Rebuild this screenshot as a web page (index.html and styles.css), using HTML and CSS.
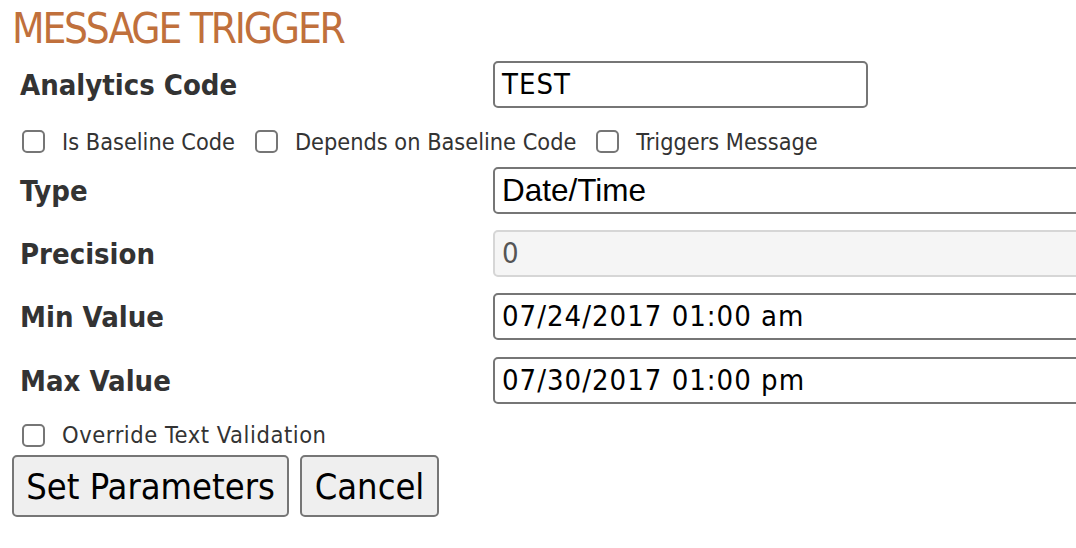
FILE: index.html
```html
<!DOCTYPE html>
<html>
<head>
<meta charset="utf-8">
<link rel="stylesheet" href="styles.css">
</head>
<body>
<div class="page">
  <h1 class="title">MESSAGE TRIGGER</h1>
  <div class="row row-first">
    <label class="label">Analytics Code</label>
    <div class="field field-short">TEST</div>
  </div>
  <div class="checks checks-top">
    <label class="check"><span class="box"></span>Is Baseline Code</label>
    <label class="check"><span class="box"></span>Depends on Baseline Code</label>
    <label class="check"><span class="box"></span>Triggers Message</label>
  </div>
  <div class="row row-type">
    <label class="label">Type</label>
    <div class="field field-select">Date/Time</div>
  </div>
  <div class="row">
    <label class="label">Precision</label>
    <div class="field field-disabled">0</div>
  </div>
  <div class="row">
    <label class="label">Min Value</label>
    <div class="field">07/24/2017 01:00 am</div>
  </div>
  <div class="row row-max">
    <label class="label">Max Value</label>
    <div class="field">07/30/2017 01:00 pm</div>
  </div>
  <div class="checks checks-single">
    <label class="check"><span class="box"></span>Override Text Validation</label>
  </div>
  <div class="buttons">
    <button class="btn btn-set">Set Parameters</button>
    <button class="btn btn-cancel">Cancel</button>
  </div>
</div>
</body>
</html>
```
FILE: styles.css
```css
html, body {
  margin: 0;
  padding: 0;
  background: #ffffff;
  overflow: hidden;
}
.page {
  width: 1076px;
  height: 548px;
  display: flex;
  flex-direction: column;
  font-family: "DejaVu Sans", sans-serif;
  font-stretch: condensed;
  color: #333333;
}
.title {
  margin: 0;
  padding: 7px 0 0 12px;
  height: 54px;
  box-sizing: border-box;
  font-weight: normal;
  font-size: 42px;
  line-height: 44px;
  letter-spacing: -2.2px;
  color: #c0703c;
}
.row {
  display: grid;
  grid-template-columns: 473px 1fr;
  align-items: center;
  padding-left: 20px;
  height: 47px;
  flex: none;
  margin-top: 16px;
}
.row-first {
  margin-top: 7px;
}
.row-type {
  margin-top: 11px;
}
.row-max {
  margin-top: 17px;
}
.label {
  font-weight: bold;
  font-size: 29px;
  color: #333333;
}
.field {
  box-sizing: border-box;
  height: 47px;
  width: 600px;
  border: 2px solid #767676;
  border-radius: 5px;
  background: #fff;
  padding: 0 7px;
  font-family: "DejaVu Sans", sans-serif;
  font-stretch: condensed;
  font-size: 29px;
  letter-spacing: 1px;
  line-height: 43px;
  color: #000;
  white-space: nowrap;
}
.field-short {
  width: 375px;
}
.field-select {
  font-family: "Liberation Sans", Arial, sans-serif;
  font-stretch: normal;
  font-size: 31.5px;
  letter-spacing: 0;
}
.field-disabled {
  background: #f5f5f5;
  border-color: #d6d6d6;
  color: #555555;
}
.checks {
  display: flex;
  gap: 20px;
  padding-left: 22px;
  height: 30px;
  flex: none;
  align-items: center;
}
.checks-top {
  margin-top: 18px;
}
.checks-single {
  margin-top: 16px;
}
.check {
  display: flex;
  align-items: center;
  font-size: 23.3px;
  color: #333333;
}
.checks-single .check {
  font-size: 23.5px;
  letter-spacing: 0.55px;
}
.box {
  box-sizing: border-box;
  width: 23px;
  height: 23px;
  border: 2px solid #767676;
  border-radius: 5px;
  margin-right: 17px;
}
.buttons {
  display: flex;
  gap: 11px;
  padding-left: 12px;
  margin-top: 5px;
  flex: none;
}
.btn {
  box-sizing: border-box;
  height: 62px;
  border: 2px solid #767676;
  border-radius: 5px;
  background: #efefef;
  font-family: "DejaVu Sans", sans-serif;
  font-stretch: condensed;
  font-size: 36px;
  color: #000;
  padding: 0 10px;
}
.btn-set {
  width: 277px;
}
.btn-cancel {
  width: 139px;
}
```
